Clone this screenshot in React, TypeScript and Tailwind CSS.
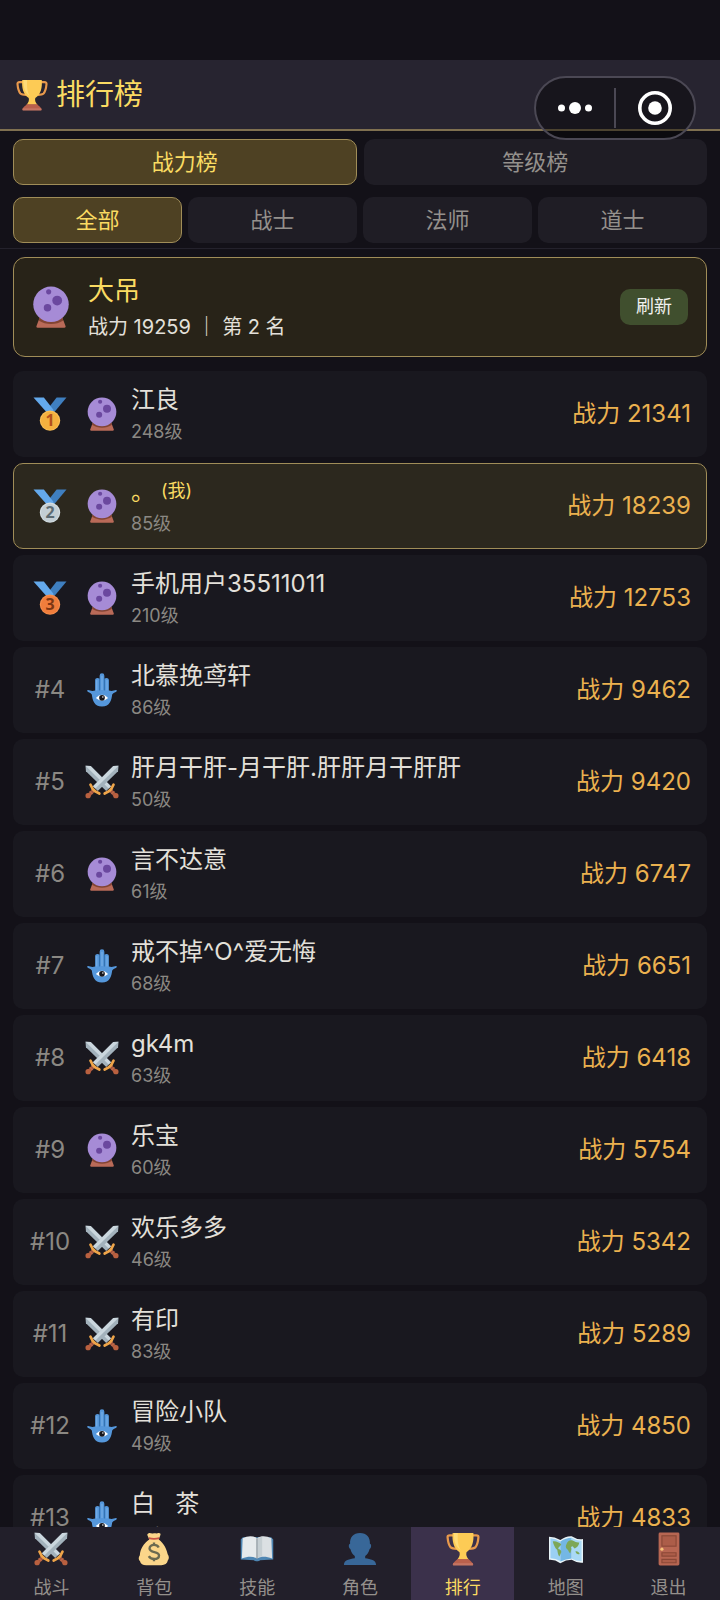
import { useState, type ReactNode } from "react";

type IconProps = { className?: string };

function Trophy({ className }: IconProps) {
  return (
    <svg viewBox="0 0 36 36" className={className} aria-hidden="true">
      <path
        d="M9 3.500H4c-1.800 0-2.500.8-2.300 2.300.4 4.700 1.500 8.500 3.300 10.500 1.500 1.400 4 1.500 6.500 1.500M27 3.500h5c1.800 0 2.500.8 2.300 2.300-.4 4.700-1.500 8.500-3.300 10.500-1.500 1.400-4 1.500-6.500 1.500"
        fill="none"
        stroke="#e8994c"
        strokeWidth="2.400"
      />
      <path
        d="M7 1h22c.6 9-.8 15.500-7.300 20.500-.8 3 .3 5 2.300 7.500H12c2-2.500 3.100-4.500 2.300-7.500C7.800 16.500 6.400 10 7 1Z"
        fill="#fdcb55"
      />
      <path d="M8.500 1h4c-.5 9 .5 14 3 18-5-3.500-7.500-9-7-18Z" fill="#ffdb78" />
      <path d="M12 28.500h12c.5 1.500 4 2.500 5 6.500H7c1-4 4.500-5 5-6.500Z" fill="#b9604c" />
      <path d="M7.500 33h21v2.500h-21z" fill="#c47462" />
    </svg>
  );
}

function CrystalBall({ className }: IconProps) {
  return (
    <svg viewBox="0 0 36 36" className={className} aria-hidden="true">
      <path d="M8.500 26.500h19l3 8c.2.7-.2 1.200-1 1.200h-23c-.8 0-1.200-.5-1-1.200Z" fill="#b96a58" />
      <path d="M7.500 29.500c6 4 15 4 21 0l-1-3h-19Z" fill="#824433" />
      <circle cx="18" cy="15.700" r="15.200" fill="#a68bd6" />
      <circle cx="16" cy="5" r="2.200" fill="#6b489f" />
      <circle cx="23.300" cy="12.500" r="4.200" fill="#6b489f" />
      <circle cx="15" cy="18.700" r="3.200" fill="#6b489f" />
    </svg>
  );
}

function Hamsa({ className }: IconProps) {
  return (
    <svg viewBox="0 0 36 36" className={className} aria-hidden="true">
      <path
        d="M15.500 2.800a2.500 2.500 0 0 1 5 0v3.500c1.800-1.800 4.800-1.100 4.800 1.500v10.700c2.500 1 5.500.3 7.500-.4 1 0 1.200.8.500 1.400-1.500 1.200-3.500 1.200-4.500 3.200C28 28.500 26.500 35.500 18 35.500S8 28.500 7.200 22.700c-1-2-3-2-4.500-3.200-.7-.6-.5-1.400.5-1.400 2 .7 5 1.400 7.500.4V7.800c0-2.600 3-3.300 4.800-1.500Z"
        fill="#5597db"
      />
      <path d="M15.500 6v12.500M20.500 6v12.500" stroke="#2f6cab" strokeWidth="1" />
      <path d="M12.500 7.500v11M18 3v15M23.300 7.500v11" stroke="#7fb6ea" strokeWidth="1" />
      <path d="M11.500 26.500q6.500-7 13 0-6.500 5.500-13 0Z" fill="#fff" />
      <circle cx="18" cy="26.300" r="3" fill="#16161c" />
      <circle cx="18.900" cy="25.400" r=".8" fill="#fff" />
    </svg>
  );
}

function Sword({ flip = false }: { flip?: boolean }) {
  return (
    <g transform={flip ? "translate(36 0) scale(-1 1)" : undefined}>
      <path d="M35.500.8 30 1 8.500 22.500l5 5L35 6.500Z" fill="#a3b2bc" />
      <path d="M35.500.8 30 1 8.500 22.500l2.500 2.500Z" fill="#cbd7de" />
      <path d="m9.500 26.500-5.500 5.500" stroke="#a85840" strokeWidth="4" />
      <path d="m7 25.800 3 3M5 27.800l3 3" stroke="#cf7a50" strokeWidth="1" />
      <circle cx="3.300" cy="32.500" r="2.800" fill="#b9603f" />
      <path d="M5.800 20.800 8 25l3 3 4.200 2.200" fill="none" stroke="#efa549" strokeWidth="2.800" strokeLinecap="round" />
    </g>
  );
}

function Swords({ className }: IconProps) {
  return (
    <svg viewBox="0 0 36 36" className={className} aria-hidden="true">
      <Sword flip />
      <Sword />
    </svg>
  );
}

const medalColors = [
  { fill: "#f5b13f", edge: "#fbbf57", ink: "#b3501c" },
  { fill: "#c3ced4", edge: "#d3dde2", ink: "#5c6b73" },
  { fill: "#f07d3c", edge: "#f58e4d", ink: "#7c3613" },
];

function Medal({ place, className }: { place: number; className?: string }) {
  const { fill, edge, ink } = medalColors[place - 1];

  return (
    <svg viewBox="0 0 36 36" className={className} role="img" aria-label={`第${place}名`}>
      <path d="M35.500.5H25L14.500 14l6 4.500Z" fill="#3f7fc0" />
      <path d="M.5.500H11.500L22 14l-5 5Z" fill="#64a9ec" />
      <circle cx="18" cy="25" r="10.800" fill={edge} />
      <circle cx="18" cy="25.200" r="9.600" fill={fill} />
      <text
        x="18"
        y="31"
        textAnchor="middle"
        fontSize="17"
        fontWeight="700"
        fontFamily="Noto Sans, sans-serif"
        fill={ink}
      >
        {place}
      </text>
    </svg>
  );
}

function MoneyBag({ className }: IconProps) {
  return (
    <svg viewBox="0 0 36 36" className={className} aria-hidden="true">
      <path
        d="M12 1.500c2-1.200 3 .6 5 0s3 .3 5-.2c2-.6 3.500.4 2.800 2L23 8c5.500 4 8.300 10 9.500 15.500 1.500 2 1.700 4.500.2 6.500-.7 3.500-3.200 5.200-7 5.200H9.800c-3.800 0-6-1.200-6.600-4.200-1.900-2-1.700-4.500-.2-6.500C3.500 18 7 12 13 8l-2-4.500c-.3-.8.2-1.600 1-2Z"
        fill="#fbd68a"
      />
      <path d="M12.500 6.500q5.500 1.600 11 0" stroke="#c95445" strokeWidth="1.800" fill="none" />
      <path
        d="M23 16.500c-1-2-2.800-2.800-5-2.800-2.700 0-4.700 1.400-4.700 3.800 0 5 10 2.500 10 7.300 0 2.400-2.300 3.700-5.200 3.700-2.400 0-4.500-1-5.600-3M18 11v3M18 28v3"
        fill="none"
        stroke="#6b6a50"
        strokeWidth="2.500"
      />
    </svg>
  );
}

function Book({ className }: IconProps) {
  return (
    <svg viewBox="0 0 36 36" className={className} aria-hidden="true">
      <path d="M.8 8 3 5.500h30L35.200 8v21l-14 .8c-1 1.600-5.400 1.600-6.400 0L.8 29Z" fill="#4e86b3" />
      <path d="M2.800 6.500C8 4 13.500 3.500 18 6.500V28c-4.500-2.500-10-2.200-16 0Z" fill="#e6eaec" />
      <path d="M33.200 6.500C28 4 22.500 3.500 18 6.500V28c4.500-2.500 10-2.200 16 0Z" fill="#dbe0e3" />
      <path d="M18 6.500V28" stroke="#7f8b92" strokeWidth="1.200" />
      <path d="M19 6.500q2.500-1.500 4.500-1.600V26q-2.500.2-4.500 1Z" fill="#c5ced2" />
    </svg>
  );
}

function Person({ className }: IconProps) {
  return (
    <svg viewBox="0 0 36 36" className={className} aria-hidden="true">
      <path
        d="M18 1c7 0 11 4.500 10.500 11.500 1.800 0 1.800 4.500-.3 5.500-.9 3.500-2.500 6-4.700 7.500v2.300c5.500 1 11.500 1.500 11.500 7.200H1c0-5.700 6-6.200 11.500-7.200v-2.300c-2.200-1.500-3.800-4-4.700-7.500-2.100-1-2.100-5.500-.3-5.500C7 5.500 11 1 18 1Z"
        fill="#386798"
      />
    </svg>
  );
}

function WorldMap({ className }: IconProps) {
  return (
    <svg viewBox="0 0 36 36" className={className} aria-hidden="true">
      <path d="M0 5q6 0 12 3.500Q18 4 24 4.500q6 4 12 3v25q-6 .8-12-3-6 0-12 3.500-6-4-12-3.500Z" fill="#e8f3f7" />
      <path d="M1.500 6.700Q7 7 12 10v20.700Q7 28 1.500 27.700Z" fill="#9bd0f3" />
      <path d="M12 10q6-4 12-4v22q-6 .5-12 3.200Z" fill="#74b7e4" />
      <path d="M24 6q5.500 3.500 10.500 3.200v21.500Q29 31 24 28Z" fill="#a9d9f5" />
      <path
        d="M4 10c3-.7 6.500 1 9 3-1 2.300-3.500 3-3.200 5 1.500.2 3.700 1.700 3.200 3.500L11 26c-1.500-2-1.700-4-2.200-7C6 16.500 5 13.500 4 10ZM18.500 13c1-3.500 4-5 6.500-4 3 1.500 5 2.500 7 2-.5 4-3 5.500-5 6.500L25 15l-2 1c1.500 2 .2 4-.5 6.500-2.200-1-1.500-3.500-3.500-4.500-1.500-1.500-1.500-3-.5-5ZM28 20.500c2-.5 4 1 4.500 2.800-2 .7-4 .2-4.500-2.800Z"
        fill="#7da757"
      />
    </svg>
  );
}

function Door({ className }: IconProps) {
  return (
    <svg viewBox="0 0 36 36" className={className} aria-hidden="true">
      <rect x="7" y=".5" width="22" height="35" rx="1.500" fill="#b76652" />
      <rect x="10.500" y="4" width="15" height="11" fill="#ac5d49" stroke="#8a4837" strokeWidth="1.200" />
      <path d="M10.500 22h15v3.500h-15zM10.500 29h15v3.500h-15z" fill="#ac5d49" stroke="#8a4837" strokeWidth="1.200" />
      <circle cx="10.500" cy="18.200" r="1.700" fill="#f6c178" />
    </svg>
  );
}

const avatars = {
  mage: CrystalBall,
  taoist: Hamsa,
  warrior: Swords,
};

type Player = {
  rank: number;
  name: string;
  level: number;
  power: number;
  job: keyof typeof avatars;
  isMe?: boolean;
};

const players: Player[] = [
  { rank: 1, name: "江良", level: 248, power: 21341, job: "mage" },
  { rank: 2, name: "。", level: 85, power: 18239, job: "mage", isMe: true },
  { rank: 3, name: "手机用户35511011", level: 210, power: 12753, job: "mage" },
  { rank: 4, name: "北慕挽鸢轩", level: 86, power: 9462, job: "taoist" },
  { rank: 5, name: "肝月干肝-月干肝.肝肝月干肝肝", level: 50, power: 9420, job: "warrior" },
  { rank: 6, name: "言不达意", level: 61, power: 6747, job: "mage" },
  { rank: 7, name: "戒不掉^O^爱无悔", level: 68, power: 6651, job: "taoist" },
  { rank: 8, name: "gk4m", level: 63, power: 6418, job: "warrior" },
  { rank: 9, name: "乐宝", level: 60, power: 5754, job: "mage" },
  { rank: 10, name: "欢乐多多", level: 46, power: 5342, job: "warrior" },
  { rank: 11, name: "有印", level: 83, power: 5289, job: "warrior" },
  { rank: 12, name: "冒险小队", level: 49, power: 4850, job: "taoist" },
  { rank: 13, name: "白   茶", level: 47, power: 4833, job: "taoist" },
];

const boards = ["战力榜", "等级榜"];
const jobs = ["全部", "战士", "法师", "道士"];

const navItems = [
  { label: "战斗", Icon: Swords },
  { label: "背包", Icon: MoneyBag },
  { label: "技能", Icon: Book },
  { label: "角色", Icon: Person },
  { label: "排行", Icon: Trophy },
  { label: "地图", Icon: WorldMap },
  { label: "退出", Icon: Door },
];

function TabButton({
  active,
  onClick,
  children,
}: {
  active: boolean;
  onClick: () => void;
  children: ReactNode;
}) {
  return (
    <button
      type="button"
      aria-pressed={active}
      onClick={onClick}
      className={`flex-1 rounded-[10px] border py-1.5 text-[22px] leading-8 ${
        active
          ? "border-[#a08d58] bg-[#4e4123] text-[#fadb62]"
          : "border-transparent bg-[#1f1d25] text-[#94908c]"
      }`}
    >
      {children}
    </button>
  );
}

function PlayerRow({ player }: { player: Player }) {
  const Avatar = avatars[player.job];

  return (
    <li
      className={`flex items-center gap-3 rounded-[10px] border py-3 pr-[15px] pl-[13px] ${
        player.isMe ? "border-[#a08d58] bg-[#2c281e]" : "border-transparent bg-[#19181f]"
      }`}
    >
      <div className="flex w-[46px] shrink-0 justify-center text-2xl text-[#8b8883]">
        {player.rank <= 3 ? (
          <Medal place={player.rank} className="size-[34px]" />
        ) : (
          <span>#{player.rank}</span>
        )}
      </div>
      <Avatar className="size-[34px] shrink-0" />
      <div className="flex min-w-0 flex-1 flex-col gap-1">
        <p
          className={`text-2xl leading-8 whitespace-pre ${
            player.isMe ? "text-[#fadb62]" : "text-[#e3e0da]"
          }`}
        >
          {player.name}
          {player.isMe && <span className="ml-1.5 align-[3px] text-lg leading-6">(我)</span>}
        </p>
        <p className="text-lg leading-6 text-[#8b8883]">{player.level}级</p>
      </div>
      <span className="shrink-0 text-2xl leading-8 text-[#ebb14f]">战力 {player.power}</span>
    </li>
  );
}

export default function App() {
  const [board, setBoard] = useState("战力榜");
  const [job, setJob] = useState("全部");
  const [page, setPage] = useState("排行");

  return (
    <div className="relative flex h-screen flex-col overflow-hidden bg-[#131118] pt-15 font-['Inter','Noto_Sans_CJK_SC',sans-serif]">
      <header className="flex shrink-0 items-center gap-2 border-b-2 border-[#7f7050] bg-[#272430] px-4 py-3">
        <Trophy className="size-8" />
        <h1 className="text-[29px] leading-[45px] text-[#fadb62]">排行榜</h1>
      </header>

      <div className="absolute top-19 right-6 flex h-16 w-[162px] items-center rounded-full border-2 border-[#4b4854] bg-black/40">
        <button type="button" aria-label="更多" className="flex flex-1 justify-center">
          <svg viewBox="0 0 34 12" className="h-3 w-[34px] fill-white">
            <circle cx="3.500" cy="6" r="3.500" />
            <circle cx="17" cy="6" r="6" />
            <circle cx="30.500" cy="6" r="3.500" />
          </svg>
        </button>
        <span className="h-10 w-0.5 bg-[#4b4854]" />
        <button type="button" aria-label="关闭" className="flex flex-1 justify-center">
          <svg viewBox="0 0 34 34" className="size-[34px]">
            <circle cx="17" cy="17" r="15.200" fill="none" stroke="#fff" strokeWidth="3.600" />
            <circle cx="17" cy="17" r="6.800" fill="#fff" />
          </svg>
        </button>
      </div>

      <div className="flex shrink-0 flex-col gap-3 border-b border-[#24222c] px-[13px] pt-2 pb-[5px]">
        <div className="flex gap-[7px]">
          {boards.map((item) => (
            <TabButton key={item} active={item === board} onClick={() => setBoard(item)}>
              {item}
            </TabButton>
          ))}
        </div>
        <div className="flex gap-1.5">
          {jobs.map((item) => (
            <TabButton key={item} active={item === job} onClick={() => setJob(item)}>
              {item}
            </TabButton>
          ))}
        </div>
      </div>

      <main className="min-h-0 flex-1 overflow-y-auto px-[13px] pt-2 [scrollbar-width:none]">
        <section className="flex items-center gap-4 rounded-xl border border-[#a08d58] bg-[#282318] py-[13px] pr-[18px] pl-4">
          <CrystalBall className="size-[42px] shrink-0" />
          <div className="flex min-w-0 flex-1 flex-col gap-0.5 pt-0.5">
            <h2 className="text-[26px] leading-9 text-[#fadb62]">大吊</h2>
            <p className="text-xl leading-8 text-[#e3e0da]">战力 19259 ｜ 第 2 名</p>
          </div>
          <button
            type="button"
            className="shrink-0 rounded-[10px] bg-[#404f2e] px-4 py-1.5 text-lg leading-6 text-[#f1f1ee]"
          >
            刷新
          </button>
        </section>

        <ol className="mt-3.5 flex flex-col gap-1.5">
          {players.map((player) => (
            <PlayerRow key={player.rank} player={player} />
          ))}
        </ol>
      </main>

      <nav className="flex shrink-0 bg-[#221f2a]">
        {navItems.map(({ label, Icon }) => (
          <button
            key={label}
            type="button"
            aria-current={label === page ? "page" : undefined}
            onClick={() => setPage(label)}
            className={`flex flex-1 flex-col items-center gap-2.5 pt-[5px] text-lg leading-6 ${
              label === page ? "bg-[#3b314b] text-[#fadb62]" : "text-[#94908c]"
            }`}
          >
            <Icon className="size-[34px]" />
            {label}
          </button>
        ))}
      </nav>
    </div>
  );
}
